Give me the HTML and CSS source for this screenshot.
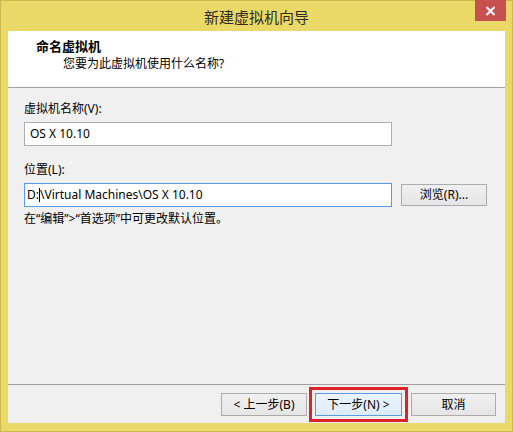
FILE: index.html
```html
<!DOCTYPE html>
<html lang="zh-CN">
<head>
<meta charset="utf-8">
<title>新建虚拟机向导</title>
<link rel="stylesheet" href="styles.css">
</head>
<body>
<div class="window">
  <div class="titlebar">
    <span class="title">新建虚拟机向导</span>
    <div class="close">
      <svg width="11" height="10" viewBox="0 0 11 10"><path d="M1.5 1 L9.5 9 M9.5 1 L1.5 9" stroke="#fff" stroke-width="2" fill="none"/></svg>
    </div>
  </div>
  <div class="client">
    <div class="header">
      <div class="h-title">命名虚拟机</div>
      <div class="h-sub">您要为此虚拟机使用什么名称?</div>
    </div>
    <div class="body">
      <div class="label">虚拟机名称(V):</div>
      <div class="field">OS X 10.10</div>
      <div class="label label2">位置(L):</div>
      <div class="row">
        <div class="field focused">D:<span class="caret"></span>\Virtual Machines\OS X 10.10</div>
        <div class="btn browse">浏览(R)...</div>
      </div>
      <div class="note">在“编辑”&gt;“首选项”中可更改默认位置。</div>
    </div>
    <div class="footer">
      <div class="btn">&lt; 上一步(B)</div>
      <div class="btn default">下一步(N) &gt;</div>
      <div class="btn cancel">取消</div>
    </div>
  </div>
</div>
</body>
</html>
```

FILE: styles.css
```css
html, body {
  margin: 0;
  padding: 0;
}
body {
  width: 513px;
  height: 432px;
  font-family: "Noto Sans", "Noto Sans CJK SC", sans-serif;
  font-size: 12px;
  color: #000;
}
.window {
  box-sizing: border-box;
  width: 513px;
  height: 432px;
  background: #ebd967;
  border: 1px solid #cdb94f;
  display: flex;
  flex-direction: column;
}
.titlebar {
  position: relative;
  height: 30px;
  display: flex;
  align-items: center;
  justify-content: center;
}
.title {
  font-family: "Noto Sans CJK SC", sans-serif;
  font-size: 15px;
  color: #2e2c22;
  line-height: 18px;
  margin-top: 2px;
}
.close {
  position: absolute;
  top: -1px;
  right: 6px;
  width: 31px;
  height: 21px;
  background: #c75050;
  display: flex;
  align-items: center;
  justify-content: center;
}
.client {
  flex: 1;
  margin: 0 7px 8px 7px;
  display: flex;
  flex-direction: column;
  background: #f0f0f0;
}
.header {
  height: 56px;
  background: #fff;
  border-bottom: 1px solid #a0a0a0;
  padding-top: 7px;
  box-sizing: border-box;
  height: 57px;
}
.h-title {
  font-family: "Noto Sans CJK SC", sans-serif;
  font-weight: bold;
  font-size: 13px;
  line-height: 16px;
  padding-left: 28px;
}
.h-sub {
  line-height: 16px;
  margin-top: 2px;
  padding-left: 55px;
}
.body {
  flex: 1;
  padding: 13px 16px 0 16px;
}
.label {
  line-height: 16px;
  margin-bottom: 5px;
}
.label2 {
  margin-top: 16px;
}
.field {
  box-sizing: border-box;
  width: 368px;
  height: 24px;
  background: #fff;
  border: 1px solid #abadb3;
  padding: 0 5px;
  line-height: 22px;
  white-space: nowrap;
}
.field.focused {
  border-color: #569de5;
  padding-left: 2px;
}
.caret {
  display: inline-block;
  width: 1px;
  height: 14px;
  background: #000;
  vertical-align: -3px;
}
.row {
  display: flex;
  align-items: center;
  gap: 9px;
}
.btn {
  box-sizing: border-box;
  width: 86px;
  height: 23px;
  border: 1px solid #acacac;
  background: linear-gradient(#f0f0f0, #e5e5e5);
  display: flex;
  align-items: center;
  justify-content: center;
  line-height: 16px;
}
.browse {
  height: 22px;
}
.note {
  line-height: 16px;
  margin-top: 4px;
}
.footer {
  height: 39px;
  box-sizing: border-box;
  border-top: 1px solid #a0a0a0;
  display: flex;
  justify-content: flex-end;
  align-items: flex-start;
  padding-top: 8px;
  padding-right: 9px;
  gap: 8px;
}
.btn.default {
  width: 87px;
  border-color: #569de5;
  background: linear-gradient(#ecf4fc, #dcecfc);
  outline: 3px solid #e0202b;
  outline-offset: 3px;
}
.btn.cancel {
  width: 85px;
  margin-left: 1px;
}
```
